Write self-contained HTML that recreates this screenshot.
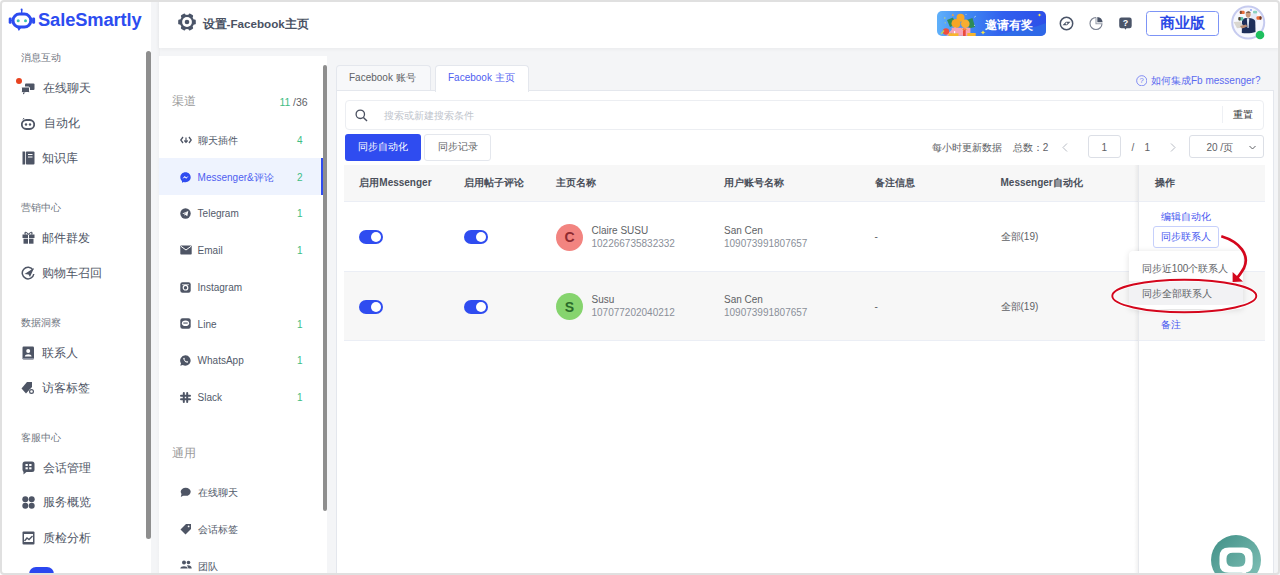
<!DOCTYPE html>
<html><head><meta charset="utf-8">
<style>
*{margin:0;padding:0;box-sizing:border-box}
html,body{width:1280px;height:575px;overflow:hidden;background:#fff;font-family:"Liberation Sans",sans-serif}
.a{position:absolute}
.t{position:absolute;white-space:nowrap;line-height:1}
#frame{position:absolute;left:0;top:0;width:1280px;height:575px;border:2px solid #e0e0e0;border-radius:4px;pointer-events:none;z-index:50}
.sec{font-size:10px;color:#6f7580}
.nav{font-size:11.67px;color:#4e5565}
.ch{font-size:10px;color:#525a6a}
.cnt{font-size:10px;color:#3ebd83}
.hd{font-size:10px;font-weight:bold;color:#4a4f5a}
.cell{font-size:10px;color:#606266}
.sub{font-size:10px;color:#8a8f99}
.lnk{font-size:10px;color:#4656ef}
</style></head><body>
<div id="frame"></div>

<!-- page gray bg -->
<div class="a" style="left:151px;top:0;width:1129px;height:575px;background:#f4f5f7"></div>

<!-- LEFT SIDEBAR -->
<div class="a" style="left:0;top:0;width:151px;height:575px;background:#fff"></div>
<svg class="a" style="left:0;top:0" width="40" height="40" viewBox="0 0 40 40">
  <path d="M21.7 12.8 L21.7 10.3" stroke="#2c4cf0" stroke-width="1.4" stroke-linecap="round"/>
  <circle cx="21.6" cy="9.6" r="1" fill="#2c4cf0"/>
  <rect x="13" y="14.1" width="17.8" height="13" rx="6.5" fill="none" stroke="#2c4cf0" stroke-width="3"/>
  <rect x="8.7" y="17.4" width="3" height="6.3" rx="1.3" fill="#2c4cf0"/>
  <rect x="32.1" y="17.4" width="3" height="6.3" rx="1.3" fill="#2c4cf0"/>
  <path d="M11 20.5 L13 20.5 M30.8 20.5 L32.5 20.5" stroke="#2c4cf0" stroke-width="1"/>
  <path d="M17.3 28 L18.8 31 L21 28Z" fill="#2c4cf0"/>
  <circle cx="18.2" cy="20.7" r="1.5" fill="#3cc4b0"/>
  <circle cx="25.5" cy="20.7" r="1.5" fill="#3cc4b0"/>
</svg>
<div class="t" style="left:38px;top:11px;font-size:18.3px;font-weight:bold;color:#2c4cf0;letter-spacing:-0.1px">SaleSmartly</div>

<div class="t sec" style="left:21px;top:53px">消息互动</div>
<div class="a" style="left:16px;top:78px;width:6px;height:6px;border-radius:50%;background:#e8431f"></div>
<svg class="a" style="left:21px;top:83px" width="14" height="12" viewBox="0 0 14 12"><rect x="4" y="0.5" width="9.5" height="6.5" rx="1" fill="#4e5565"/><rect x="0.5" y="4" width="8" height="5.5" rx="1" fill="#4e5565" stroke="#fff" stroke-width="1"/><path d="M2 9.5 L2 11.5 L4.5 9.5Z" fill="#4e5565"/></svg>
<div class="t nav" style="left:42.5px;top:81.5px">在线聊天</div>

<svg class="a" style="left:21px;top:117px" width="14" height="13" viewBox="0 0 14 13"><rect x="0.8" y="3" width="12.4" height="9" rx="4.5" fill="none" stroke="#4e5565" stroke-width="1.8"/><circle cx="5" cy="7.5" r="1.2" fill="#4e5565"/><circle cx="9" cy="7.5" r="1.2" fill="#4e5565"/><path d="M2 2.5 L3 1" stroke="#4e5565" stroke-width="1"/></svg>
<div class="t nav" style="left:44px;top:117.3px">自动化</div>

<svg class="a" style="left:21.5px;top:151px" width="13" height="14" viewBox="0 0 13 14"><rect x="0.5" y="0.5" width="2.5" height="13" fill="#4e5565"/><rect x="3.8" y="0.5" width="8.7" height="13" rx="1" fill="#4e5565"/><rect x="6" y="3" width="4.5" height="1" fill="#fff"/><rect x="6" y="5.5" width="4.5" height="1" fill="#fff"/></svg>
<div class="t nav" style="left:42.3px;top:151.8px">知识库</div>

<div class="t sec" style="left:21px;top:203px">营销中心</div>
<svg class="a" style="left:21.5px;top:231px" width="13" height="13" viewBox="0 0 13 13"><rect x="0.5" y="3.5" width="12" height="3.5" fill="#4e5565"/><rect x="1.5" y="7.7" width="10" height="5" fill="#4e5565"/><rect x="6" y="3.5" width="1" height="9.5" fill="#fff"/><path d="M6.5 3.5 C4 0 2 1 3.5 3.5 M6.5 3.5 C9 0 11 1 9.5 3.5" stroke="#4e5565" stroke-width="1.2" fill="none"/></svg>
<div class="t nav" style="left:42.3px;top:231.8px">邮件群发</div>

<svg class="a" style="left:21px;top:266px" width="14" height="14" viewBox="0 0 14 14"><path d="M12 4 A5.8 5.8 0 1 0 12.8 8" fill="none" stroke="#4e5565" stroke-width="1.5"/><path d="M3.5 8 L13 2 L9 11 L7.5 8.5Z" fill="#4e5565"/></svg>
<div class="t nav" style="left:42.3px;top:267.4px">购物车召回</div>

<div class="t sec" style="left:21px;top:317.8px">数据洞察</div>
<svg class="a" style="left:21.5px;top:346px" width="13" height="14" viewBox="0 0 13 14"><rect x="0.5" y="0.5" width="11.5" height="13" rx="1.2" fill="#4e5565"/><circle cx="6.2" cy="5" r="2" fill="#fff"/><path d="M2.8 10.5 C3 7.5 9.4 7.5 9.6 10.5Z" fill="#fff"/><rect x="1" y="12" width="11" height="1" fill="#8a90a0"/></svg>
<div class="t nav" style="left:42.3px;top:346.7px">联系人</div>

<svg class="a" style="left:21px;top:381px" width="14" height="14" viewBox="0 0 14 14"><path d="M6 1 L11 1 L11 6 L5 12.5 L0.5 7.5Z" fill="#4e5565"/><circle cx="10.5" cy="10.5" r="2.6" fill="#fff"/><circle cx="10.5" cy="10.5" r="1.9" fill="none" stroke="#4e5565" stroke-width="1.2"/></svg>
<div class="t nav" style="left:42.3px;top:382.3px">访客标签</div>

<div class="t sec" style="left:21px;top:432.7px">客服中心</div>
<svg class="a" style="left:21.5px;top:461px" width="13" height="14" viewBox="0 0 13 14"><rect x="0.5" y="0.5" width="12" height="10.5" rx="2.5" fill="#4e5565"/><path d="M1.5 10 L1.5 13.5 L5 10.5Z" fill="#4e5565"/><rect x="3.5" y="3" width="2.3" height="2" fill="#fff"/><rect x="7.2" y="3" width="2.3" height="2" fill="#fff"/><rect x="3.5" y="6.3" width="2.3" height="2" fill="#fff"/><rect x="7.2" y="6.3" width="2.3" height="2" fill="#fff"/></svg>
<div class="t nav" style="left:42.6px;top:462.3px">会话管理</div>

<svg class="a" style="left:21.5px;top:495.5px" width="13" height="13" viewBox="0 0 13 13"><circle cx="3.3" cy="3.3" r="3" fill="#4e5565"/><circle cx="9.7" cy="3.3" r="3" fill="#4e5565"/><circle cx="3.3" cy="9.7" r="3" fill="#4e5565"/><circle cx="9.7" cy="9.7" r="3" fill="#4e5565"/></svg>
<div class="t nav" style="left:42.6px;top:496px">服务概览</div>

<svg class="a" style="left:21.5px;top:531px" width="13" height="14" viewBox="0 0 13 14"><rect x="0.5" y="0.5" width="12" height="13" rx="1" fill="#4e5565"/><rect x="2" y="3" width="9" height="8" fill="#fff"/><path d="M2.5 10 L5 7 L7 8.5 L10.5 5" stroke="#4e5565" stroke-width="1.4" fill="none"/></svg>
<div class="t nav" style="left:42.6px;top:531.8px">质检分析</div>

<div class="a" style="left:29px;top:567px;width:25px;height:14px;border-radius:7px;background:#2b47f0"></div>
<div class="a" style="left:146px;top:51px;width:5px;height:488px;border-radius:3px;background:#8e8e8e"></div>

<div class="a" style="left:156px;top:0;width:3.5px;height:575px;background:linear-gradient(90deg,rgba(0,0,0,0),rgba(0,0,0,0.025))"></div>
<!-- HEADER -->
<div class="a" style="left:159px;top:0;width:1121px;height:48.3px;background:#fff;box-shadow:0 1px 4px rgba(0,0,0,0.05)"></div>
<svg class="a" style="left:177px;top:11.6px" width="20" height="20" viewBox="-10 -10 20 20">
  <g fill="#4a5468"><circle r="7.2"/>
  <rect x="-8.8" y="-2.5" width="17.6" height="5" rx="1.2"/>
  <rect x="-8.8" y="-2.5" width="17.6" height="5" rx="1.2" transform="rotate(60)"/>
  <rect x="-8.8" y="-2.5" width="17.6" height="5" rx="1.2" transform="rotate(120)"/></g>
  <circle r="4.9" fill="#fff"/><circle r="2.3" fill="#4a5468"/>
</svg>
<div class="t" style="left:202.5px;top:17.5px;font-size:11.67px;font-weight:bold;color:#4a5263">设置-Facebook主页</div>

<!-- invite banner -->
<div class="a" style="left:937px;top:11px;width:109px;height:25px;border-radius:5px;background:linear-gradient(90deg,#5fb0fa 0%,#3f86f2 30%,#3160ee 60%,#2d4fe8 100%);overflow:hidden">
  <svg class="a" style="left:0;top:0" width="109" height="25" viewBox="0 0 109 25">
    <path d="M60 25 C75 18 90 20 109 12 L109 25Z" fill="#2f7ae6" opacity="0.55"/>
    <path d="M10 9 L16 6.5 L19 13.5 L13 16Z" fill="#2e8b57"/>
    <path d="M29.5 9 L35.5 7 L38 16 L32 17.5Z" fill="#2e8b57"/>
    <path d="M14.5 4.5 L16 2.5 L17 5Z" fill="#f0a040"/>
    <circle cx="23.5" cy="6.8" r="4" fill="#f6a82a"/>
    <circle cx="19" cy="12.5" r="4.5" fill="#f5a524"/>
    <circle cx="28.3" cy="12.8" r="4.3" fill="#f7ad30"/>
    <rect x="14.7" y="16.8" width="18.7" height="8" fill="#f7a3b6"/>
    <rect x="26" y="17.5" width="2.7" height="7.5" fill="#ea4a3c"/>
    <path d="M24.5 17.5 L26.5 19 L28.5 17.5 L30.5 19" stroke="#f5b030" stroke-width="1" fill="none"/>
    <path d="M9 24 L18 16 L19.5 17.5 L11 25Z" fill="#f7a3b6"/>
    <circle cx="9" cy="20.5" r="3.2" fill="#ee4d3d"/>
    <rect x="11.5" y="22.3" width="10" height="2.7" fill="#f7b52e"/>
    <rect x="30.3" y="22" width="8.4" height="3" fill="#f7b52e"/>
    <rect x="17" y="20" width="1.2" height="2.2" fill="#fff"/>
    <path d="M4 23 L7 19.5" stroke="#b8d860" stroke-width="1.2"/>
    <circle cx="7.8" cy="7" r="0.7" fill="#c8d870"/>
    <circle cx="8.2" cy="11.8" r="0.6" fill="#c8d870"/>
    <circle cx="29" cy="3.5" r="0.6" fill="#b0d8e8"/>
    <path d="M37 6.5 L39 5" stroke="#b0d8e8" stroke-width="0.8"/>
    <circle cx="37.5" cy="14.3" r="0.6" fill="#b0d8e8"/>
    <path d="M46 19.5 L47 21 L48.5 21.5 L47 22 L46 23.5 L45 22 L43.5 21.5 L45 21Z" fill="#f8e44a"/>
    <path d="M102.5 2.5 L103.2 3.6 L104.5 4 L103.2 4.4 L102.5 5.5 L101.8 4.4 L100.5 4 L101.8 3.6Z" fill="#f8e44a"/>
  </svg>
  <div class="t" style="left:48.3px;top:7.7px;font-size:12.3px;font-weight:bold;color:#fff">邀请有奖</div>
</div>

<!-- header icons -->
<svg class="a" style="left:1059px;top:16px" width="15" height="15" viewBox="0 0 15 15"><circle cx="7.5" cy="7.5" r="6.2" fill="none" stroke="#4a5468" stroke-width="1.5"/><path d="M3.5 9.2 L7 5.8 L11.5 5.8 L8 9.2Z" fill="#4a5468"/><circle cx="7.5" cy="7.5" r="0.9" fill="#fff"/></svg>
<svg class="a" style="left:1089px;top:16px" width="15" height="15" viewBox="0 0 15 15"><path d="M7 1.5 A6 6 0 1 0 13 7.5" fill="none" stroke="#7a8090" stroke-width="1.1"/><path d="M7 1.3 L7 7.7 L13.2 7.7" fill="none" stroke="#9aa0ad" stroke-width="1.1"/><path d="M8.3 0.9 A6 6 0 0 1 13.6 6.3 L8.3 6.3Z" fill="#4a5468"/></svg>
<svg class="a" style="left:1118.5px;top:16.5px" width="13" height="13" viewBox="0 0 13 13"><rect x="0.2" y="0.5" width="12.5" height="10.8" rx="2.2" fill="#4a5468"/><path d="M5.5 11 L6.5 12.8 L7.5 11Z" fill="#4a5468"/><text x="6.5" y="9.2" font-size="9" font-weight="bold" text-anchor="middle" fill="#fff" font-family="Liberation Sans">?</text></svg>

<div class="a" style="left:1146px;top:10.7px;width:72.5px;height:25.3px;border:1.5px solid #7d94f6;border-radius:3.5px"></div>
<div class="t" style="left:1160px;top:14.5px;font-size:15px;font-weight:bold;color:#2d4be6">商业版</div>

<!-- avatar -->
<svg class="a" style="left:1228px;top:3px" width="40" height="40" viewBox="1228 3 40 40">
  <circle cx="1248.2" cy="22.6" r="16" fill="#f7f8fe" stroke="#c6cbef" stroke-width="2"/>
  <rect x="1251" y="13.5" width="6" height="8" fill="#e4e9f8"/>
  <path d="M1241.8 33 L1242 21 C1242.5 18.5 1245 18 1248 18 C1252 18 1255 19 1255.3 22 L1255.5 32 C1252 33.5 1246 33.5 1241.8 33Z" fill="#1e2f5a"/>
  <path d="M1246.8 18.3 L1249.3 18.3 L1248.6 28 L1247.5 28Z" fill="#dfe6f2"/>
  <ellipse cx="1248.2" cy="14.6" rx="2.5" ry="3.1" fill="#c99a7c"/>
  <path d="M1245.6 13.5 C1245.6 10.8 1250.8 10.8 1250.8 13.2 L1250 12.5 L1246.3 12.6Z" fill="#3b2a22"/>
  <path d="M1233.6 22 L1240.5 21.4 L1244.5 27.6 L1237 28.3Z" fill="#d9d6d0"/>
  <path d="M1240 26 L1246 24.5 L1247.5 26.5 L1242 28.5Z" fill="#b88a70"/>
  <rect x="1239.8" y="10.7" width="4.9" height="3.4" rx="1.2" fill="#e8703c"/>
  <rect x="1239.8" y="10.7" width="2" height="3.4" rx="1" fill="#7a4a36"/>
  <rect x="1256.5" y="16.2" width="4.9" height="3.5" rx="1.2" fill="#ec6c38"/>
  <rect x="1259.5" y="16.2" width="2" height="3.5" rx="1" fill="#6a3a2a"/>
  <rect x="1238.4" y="16.9" width="4.9" height="3.5" rx="1.2" fill="#5fc4a8"/>
  <rect x="1238.4" y="16.9" width="2.2" height="3.5" rx="1" fill="#5a4030"/>
  <rect x="1253" y="10.7" width="4.2" height="2.7" rx="1" fill="#8cd0c0"/>
  <circle cx="1251" cy="10" r="0.8" fill="#4a6cf0"/>
  <circle cx="1260" cy="35" r="4.3" fill="#1fbf5f"/>
</svg>

<!-- CHANNEL PANEL -->
<div class="a" style="left:159px;top:56px;width:168px;height:519px;background:#fff"></div>
<div class="t" style="left:172px;top:94.5px;font-size:11.67px;color:#9a9a9a">渠道</div>
<div class="t" style="left:279.5px;top:96.5px;font-size:10.5px;color:#3ebd83">11</div>
<div class="t" style="left:293px;top:96.5px;font-size:10.5px;color:#606266">/36</div>

<div class="a" style="left:159px;top:158px;width:163.7px;height:37px;background:#eef3fe"></div>
<div class="a" style="left:320.7px;top:158px;width:2px;height:37px;background:#2f4cf0"></div>

<svg class="a" style="left:180px;top:135px" width="12" height="10" viewBox="0 0 12 10"><path d="M3 2 L0.8 5 L3 8 M9 2 L11.2 5 L9 8" fill="none" stroke="#4e5565" stroke-width="1.3"/><path d="M6 2.5 L6 7 M4.3 5.5 L6 7.3 L7.7 5.5" fill="none" stroke="#4e5565" stroke-width="1.2"/></svg>
<div class="t ch" style="left:197.6px;top:136.0px">聊天插件</div>
<div class="t cnt" style="left:297px;top:136.0px">4</div>

<svg class="a" style="left:180px;top:171.5px" width="11" height="11" viewBox="0 0 11 11"><path d="M5.5 0.3 C2.5 0.3 0.3 2.5 0.3 5.3 C0.3 6.8 0.9 8.1 2 9 L2 10.8 L3.7 9.9 C4.3 10.1 4.9 10.2 5.5 10.2 C8.5 10.2 10.7 8 10.7 5.3 C10.7 2.5 8.5 0.3 5.5 0.3Z" fill="#2f4cf0"/><path d="M2.3 6.8 L4.8 4.1 L6.1 5.4 L8.7 4 L6.2 6.7 L4.9 5.4Z" fill="#fff"/></svg>
<div class="t ch" style="left:197.6px;top:173.0px;color:#4f5ef0">Messenger&amp;评论</div>
<div class="t cnt" style="left:297px;top:173.0px">2</div>

<svg class="a" style="left:180px;top:207.5px" width="11" height="11" viewBox="0 0 11 11"><circle cx="5.5" cy="5.5" r="5.2" fill="#4e5565"/><path d="M2.3 5.4 L8.3 3 L7.3 8.3 L5.3 6.8 L4.5 7.8 L4.4 6.2 L7.2 3.8 L3.9 5.9Z" fill="#fff"/></svg>
<div class="t ch" style="left:197.6px;top:209.0px">Telegram</div>
<div class="t cnt" style="left:297px;top:209.0px">1</div>

<svg class="a" style="left:179.5px;top:245px" width="12" height="10" viewBox="0 0 12 10"><rect x="0.3" y="0.5" width="11.4" height="9" rx="0.8" fill="#4e5565"/><path d="M0.8 1.2 L6 5 L11.2 1.2" fill="none" stroke="#fff" stroke-width="1"/></svg>
<div class="t ch" style="left:197.6px;top:246.0px">Email</div>
<div class="t cnt" style="left:297px;top:246.0px">1</div>

<svg class="a" style="left:180px;top:281.5px" width="11" height="11" viewBox="0 0 11 11"><rect x="0.3" y="0.3" width="10.4" height="10.4" rx="2.2" fill="#4e5565"/><circle cx="5.5" cy="5.7" r="2.3" fill="none" stroke="#fff" stroke-width="1.2"/><rect x="2" y="2.2" width="7" height="0.9" fill="#fff" opacity="0.7"/></svg>
<div class="t ch" style="left:197.6px;top:283.0px">Instagram</div>

<svg class="a" style="left:180px;top:318px" width="11" height="11" viewBox="0 0 11 11"><rect x="0.3" y="0.3" width="10.4" height="10.4" rx="2.2" fill="#4e5565"/><ellipse cx="5.5" cy="5.2" rx="3.6" ry="2.8" fill="#fff"/><rect x="3.3" y="4.5" width="4.4" height="1.1" fill="#4e5565"/></svg>
<div class="t ch" style="left:197.6px;top:319.5px">Line</div>
<div class="t cnt" style="left:297px;top:319.5px">1</div>

<svg class="a" style="left:180px;top:355px" width="11" height="11" viewBox="0 0 11 11"><path d="M5.5 0.3 A5.2 5.2 0 1 1 2.8 10 L0.3 10.7 L1 8.3 A5.2 5.2 0 0 1 5.5 0.3Z" fill="#4e5565"/><path d="M3.3 3 C3 4.5 5 7.5 7.6 7.8 L8.2 6.8 L7 6.1 L6.4 6.6 C5.5 6.2 4.7 5.3 4.4 4.6 L4.9 4 L4.3 2.8Z" fill="#fff"/></svg>
<div class="t ch" style="left:197.6px;top:356.0px">WhatsApp</div>
<div class="t cnt" style="left:297px;top:356.0px">1</div>

<svg class="a" style="left:180px;top:391.5px" width="11" height="11" viewBox="0 0 11 11"><g stroke="#4e5565" stroke-width="2" stroke-linecap="round"><path d="M3.8 1 L3.8 10"/><path d="M7.2 1 L7.2 10"/><path d="M1 3.8 L10 3.8"/><path d="M1 7.2 L10 7.2"/></g></svg>
<div class="t ch" style="left:197.6px;top:393.0px">Slack</div>
<div class="t cnt" style="left:297px;top:393.0px">1</div>

<div class="t" style="left:172px;top:447px;font-size:11.67px;color:#9a9a9a">通用</div>
<svg class="a" style="left:180px;top:486.5px" width="11" height="11" viewBox="0 0 11 11"><ellipse cx="5.7" cy="4.8" rx="5" ry="4" fill="#4e5565"/><path d="M1.5 7 L0.8 10 L4 8.3Z" fill="#4e5565"/></svg>
<div class="t ch" style="left:197.9px;top:488.0px">在线聊天</div>
<svg class="a" style="left:180px;top:523px" width="12" height="12" viewBox="0 0 12 12"><path d="M0.5 6.5 L6 1 L11 1 L11 6 L5.5 11.5Z" fill="#4e5565"/><circle cx="8.6" cy="3.4" r="0.9" fill="#fff"/></svg>
<div class="t ch" style="left:197.9px;top:525.0px">会话标签</div>
<svg class="a" style="left:179.5px;top:560px" width="12" height="10" viewBox="0 0 12 10"><circle cx="4" cy="2.5" r="2" fill="#4e5565"/><circle cx="8.5" cy="2.5" r="1.8" fill="#4e5565"/><path d="M0.3 8.5 C0.3 5.5 7.7 5.5 7.7 8.5Z" fill="#4e5565"/><path d="M7 5.3 C9.5 5 11.7 6 11.7 8.5 L8.5 8.5Z" fill="#4e5565"/></svg>
<div class="t ch" style="left:197.9px;top:561.5px">团队</div>

<div class="a" style="left:322.7px;top:64.5px;width:4px;height:446px;border-radius:2px;background:#8e8e8e"></div>

<!-- MAIN CONTENT -->
<div class="a" style="left:335.5px;top:64.5px;width:95px;height:26.5px;background:#f7f8fa;border:1px solid #e4e7ed;border-bottom:none;border-radius:4px 4px 0 0"></div>
<div class="t" style="left:349px;top:72.7px;font-size:10px;color:#606266">Facebook 账号</div>
<div class="a" style="left:335.5px;top:90px;width:938.5px;height:490px;background:#fff;border:1px solid #e4e7ed"></div>
<div class="a" style="left:434.5px;top:64.5px;width:94px;height:27px;background:#fff;border:1px solid #e4e7ed;border-bottom:none;border-radius:4px 4px 0 0"></div>
<div class="t" style="left:448px;top:72.7px;font-size:10px;color:#4f5ef0">Facebook 主页</div>

<svg class="a" style="left:1135.5px;top:74.5px" width="11.5" height="11.5" viewBox="0 0 12 12"><circle cx="6" cy="6" r="5.3" fill="none" stroke="#6f7df2" stroke-width="0.9"/><text x="6" y="8.8" font-size="8" text-anchor="middle" fill="#6f7df2" font-family="Liberation Sans">?</text></svg>
<div class="t lnk" style="left:1151px;top:76.2px;color:#5b6af0">如何集成Fb messenger?</div>

<!-- search -->
<div class="a" style="left:344.5px;top:100px;width:919.5px;height:29.5px;border:1px solid #eceef2;border-radius:4px;background:#fff"></div>
<svg class="a" style="left:355px;top:108.5px" width="13" height="13" viewBox="0 0 13 13"><circle cx="5.3" cy="5.3" r="4.2" fill="none" stroke="#4a5060" stroke-width="1.3"/><path d="M8.4 8.4 L12 12" stroke="#4a5060" stroke-width="1.4"/></svg>
<div class="t" style="left:384px;top:110.5px;font-size:10px;color:#c0c4cc">搜索或新建搜索条件</div>
<div class="a" style="left:1221.5px;top:106px;width:1px;height:17px;background:#eef0f4"></div>
<div class="t" style="left:1233px;top:110px;font-size:10px;color:#303133">重置</div>

<!-- buttons -->
<div class="a" style="left:344.5px;top:134px;width:76.5px;height:26.5px;background:#2f4cf0;border-radius:3px"></div>
<div class="t" style="left:358px;top:142px;font-size:10px;color:#fff">同步自动化</div>
<div class="a" style="left:424px;top:134px;width:66.5px;height:26.5px;background:#fff;border:1px solid #e4e7ed;border-radius:3px"></div>
<div class="t" style="left:437.5px;top:142px;font-size:10px;color:#606266">同步记录</div>

<!-- pagination -->
<div class="t" style="left:931.5px;top:142.5px;font-size:10px;color:#606266">每小时更新数据</div>
<div class="t" style="left:1012.8px;top:142.5px;font-size:10px;color:#606266">总数：2</div>
<svg class="a" style="left:1061px;top:142px" width="8" height="11" viewBox="0 0 8 11"><path d="M6 1.5 L2 5.5 L6 9.5" fill="none" stroke="#b8bcc4" stroke-width="1"/></svg>
<div class="a" style="left:1087.7px;top:135.4px;width:33px;height:23px;border:1px solid #dcdfe6;border-radius:3px"></div>
<div class="t" style="left:1101.5px;top:142.5px;font-size:10px;color:#606266">1</div>
<div class="t" style="left:1131.5px;top:142.5px;font-size:10px;color:#606266">/</div>
<div class="t" style="left:1144.5px;top:142.5px;font-size:10px;color:#606266">1</div>
<svg class="a" style="left:1169px;top:142px" width="8" height="11" viewBox="0 0 8 11"><path d="M2 1.5 L6 5.5 L2 9.5" fill="none" stroke="#b8bcc4" stroke-width="1"/></svg>
<div class="a" style="left:1189.3px;top:135.4px;width:75px;height:23px;border:1px solid #dcdfe6;border-radius:3px"></div>
<div class="t" style="left:1206.4px;top:142.5px;font-size:10px;color:#606266">20 /页</div>
<svg class="a" style="left:1248px;top:144px" width="9" height="7" viewBox="0 0 9 7"><path d="M1.5 2 L4.5 5 L7.5 2" fill="none" stroke="#606266" stroke-width="1"/></svg>

<!-- table -->
<div class="a" style="left:344px;top:165.3px;width:920.5px;height:36.7px;background:#f7f7f7;border-bottom:1px solid #ebeef5"></div>
<div class="t hd" style="left:359.3px;top:177.8px">启用Messenger</div>
<div class="t hd" style="left:463.7px;top:177.8px">启用帖子评论</div>
<div class="t hd" style="left:556.4px;top:177.8px">主页名称</div>
<div class="t hd" style="left:724px;top:177.8px">用户账号名称</div>
<div class="t hd" style="left:874.5px;top:177.8px">备注信息</div>
<div class="t hd" style="left:1000.5px;top:177.8px">Messenger自动化</div>

<!-- row1 -->
<div class="a" style="left:344px;top:202px;width:920.5px;height:69.5px;background:#fff;border-bottom:1px solid #ebeef5"></div>
<!-- row2 -->
<div class="a" style="left:344px;top:271.5px;width:920.5px;height:69.5px;background:#f7f7f7;border-bottom:1px solid #ebeef5"></div>

<div class="a" style="left:359px;top:230.2px;width:24px;height:14px;border-radius:7px;background:#2f4cf0"><div class="a" style="right:2px;top:2px;width:10px;height:10px;border-radius:50%;background:#fff"></div></div>
<div class="a" style="left:463.8px;top:230.2px;width:24px;height:14px;border-radius:7px;background:#2f4cf0"><div class="a" style="right:2px;top:2px;width:10px;height:10px;border-radius:50%;background:#fff"></div></div>
<div class="a" style="left:556px;top:223.5px;width:27px;height:27px;border-radius:50%;background:#f28480"></div>
<div class="t" style="left:556px;top:230px;width:27px;text-align:center;font-size:14px;font-weight:bold;color:#8e2a30">C</div>
<div class="t cell" style="left:591.5px;top:225.5px">Claire SUSU</div>
<div class="t sub" style="left:591.5px;top:238.5px">102266735832332</div>
<div class="t cell" style="left:724px;top:225.5px">San Cen</div>
<div class="t sub" style="left:724px;top:238.5px">109073991807657</div>
<div class="t cell" style="left:874.5px;top:232px">-</div>
<div class="t cell" style="left:1000.5px;top:232px">全部(19)</div>

<div class="a" style="left:359px;top:299.7px;width:24px;height:14px;border-radius:7px;background:#2f4cf0"><div class="a" style="right:2px;top:2px;width:10px;height:10px;border-radius:50%;background:#fff"></div></div>
<div class="a" style="left:463.8px;top:299.7px;width:24px;height:14px;border-radius:7px;background:#2f4cf0"><div class="a" style="right:2px;top:2px;width:10px;height:10px;border-radius:50%;background:#fff"></div></div>
<div class="a" style="left:556px;top:293px;width:27px;height:27px;border-radius:50%;background:#86d46e"></div>
<div class="t" style="left:556px;top:299.5px;width:27px;text-align:center;font-size:14px;font-weight:bold;color:#2a6a2a">S</div>
<div class="t cell" style="left:591.5px;top:295px">Susu</div>
<div class="t sub" style="left:591.5px;top:308px">107077202040212</div>
<div class="t cell" style="left:724px;top:295px">San Cen</div>
<div class="t sub" style="left:724px;top:308px">109073991807657</div>
<div class="t cell" style="left:874.5px;top:301.5px">-</div>
<div class="t cell" style="left:1000.5px;top:301.5px">全部(19)</div>

<!-- fixed right column -->
<div class="a" style="left:1134px;top:165.3px;width:4px;height:410px;background:linear-gradient(90deg,rgba(0,0,0,0),rgba(0,0,0,0.05))"></div>
<div class="a" style="left:1137.7px;top:165.3px;width:1px;height:410px;background:#e6e8ec"></div>
<div class="a" style="left:1138.7px;top:165.3px;width:125.8px;height:36.7px;background:#f7f7f7;border-bottom:1px solid #ebeef5"></div>
<div class="t hd" style="left:1154.5px;top:177.8px">操作</div>
<div class="a" style="left:1138.7px;top:202px;width:125.8px;height:69.5px;background:#fff;border-bottom:1px solid #ebeef5"></div>
<div class="a" style="left:1138.7px;top:271.5px;width:125.8px;height:69.5px;background:#f7f7f7;border-bottom:1px solid #ebeef5"></div>
<div class="a" style="left:1138.7px;top:341px;width:125.8px;height:240px;background:#fff"></div>

<div class="t lnk" style="left:1160.8px;top:211.5px">编辑自动化</div>
<div class="a" style="left:1152.7px;top:226px;width:66px;height:22px;border:1px solid #c6d0fb;border-radius:3px;background:#fff"></div>
<div class="t lnk" style="left:1161px;top:231.8px">同步联系人</div>
<div class="t lnk" style="left:1160.9px;top:320.3px">备注</div>

<!-- dropdown -->
<div class="a" style="left:1128.7px;top:251px;width:114.3px;height:58.3px;background:#fff;border-radius:4px;box-shadow:0 1px 6px rgba(0,0,0,0.12)"></div>
<div class="a" style="left:1128.7px;top:280.7px;width:114.3px;height:24.3px;background:#f2f2f4"></div>
<div class="t" style="left:1141.7px;top:263.5px;font-size:10px;color:#606266">同步近100个联系人</div>
<div class="t" style="left:1141.7px;top:289.2px;font-size:10px;color:#606266">同步全部联系人</div>

<!-- annotation -->
<svg class="a" style="left:0;top:0;z-index:20" width="1280" height="575" viewBox="0 0 1280 575">
  <ellipse cx="1184.3" cy="296" rx="72" ry="16.2" fill="none" stroke="#fff" stroke-width="4" opacity="0.7"/><ellipse cx="1184.3" cy="296" rx="72" ry="16.2" fill="none" stroke="#d4061c" stroke-width="1.9"/>
  <path d="M1221.3 236.3 C1240 242 1250 255 1244 268 C1241 273 1239 276 1237 278" fill="none" stroke="#d4061c" stroke-width="2.7"/>
  <path d="M1232.6 272 L1232.6 282 L1243 281.5Z" fill="#d4061c"/>
</svg>

<!-- chat bubble -->
<div class="a" style="left:1211px;top:535px;width:50px;height:50px;border-radius:50%;background:linear-gradient(135deg,#3f8f86,#86c4ba);z-index:10"></div>
<svg class="a" style="left:1210px;top:540px;z-index:11" width="50" height="35" viewBox="1210 540 50 35">
  <path fill="#fff" fill-rule="evenodd" d="M1229 547.6 L1243.2 547.6 Q1252.7 547.6 1252.7 557 L1252.7 564 Q1252.7 572.8 1243.2 572.8 L1229 572.8 Q1219.5 572.8 1219.5 564 L1219.5 557 Q1219.5 547.6 1229 547.6Z M1233 552.7 L1239 552.7 Q1245.3 552.7 1245.3 558.5 L1245.3 561 Q1245.3 566.7 1239 566.7 L1233 566.7 Q1226.5 566.7 1226.5 561 L1226.5 558.5 Q1226.5 552.7 1233 552.7Z"/>
  <path d="M1240 571 L1246 575 L1246 570Z" fill="#fff"/>
</svg>

</body></html>
